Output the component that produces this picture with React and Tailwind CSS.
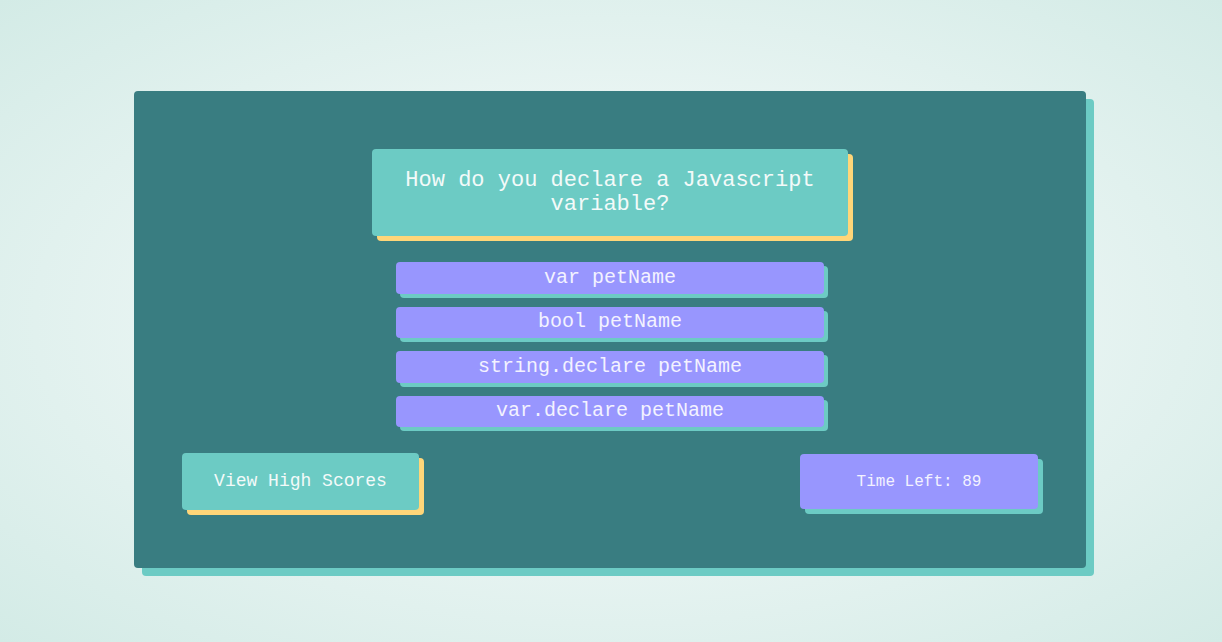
export default function App() {
  const answers = ["var petName", "bool petName", "string.declare petName", "var.declare petName"];
  return (
    <div
      className="w-full min-h-screen h-[642px] overflow-hidden bg-[radial-gradient(ellipse_at_center,#f5faf9_0%,#e8f4f2_50%,#d3ebe6_100%)] pt-[91px]"
      style={{ fontFamily: '"Liberation Mono", "Courier New", monospace' }}
    >
      <div className="ml-[134px] w-[952px] h-[477px] rounded bg-[#397d81] shadow-[8px_8px_0_#6ccbc4] flex flex-col items-center pt-[58px]">
        <div className="w-[476px] rounded bg-[#6ccbc4] shadow-[5px_5px_0_#ffd679] px-[32px] pt-[20px] pb-[19px] text-center text-[22px] leading-6 text-[#f3faf9]">
          How do you declare a Javascript variable?
        </div>
        <div className="mt-[26px] flex flex-col gap-[13px]">
          {answers.map((a) => (
            <div
              key={a}
              className="w-[428px] h-[31.5px] rounded bg-[#9896fe] shadow-[4px_4px_0_#6ccbc4] flex items-center justify-center text-[20px] text-[#f3f2ff]"
            >
              {a}
            </div>
          ))}
        </div>
        <div className="mt-[26px] w-full px-[48px] flex justify-between items-start">
          <div className="w-[237px] h-[57px] rounded bg-[#6ccbc4] shadow-[5px_5px_0_#ffd679] flex items-center justify-center text-[18px] text-[#f3faf9]">
            View High Scores
          </div>
          <div className="mt-[1px] w-[238px] h-[55px] rounded bg-[#9896fe] shadow-[5px_5px_0_#6ccbc4] flex items-center justify-center text-[16px] text-[#f3f2ff]">
            Time Left: 89
          </div>
        </div>
      </div>
    </div>
  );
}
